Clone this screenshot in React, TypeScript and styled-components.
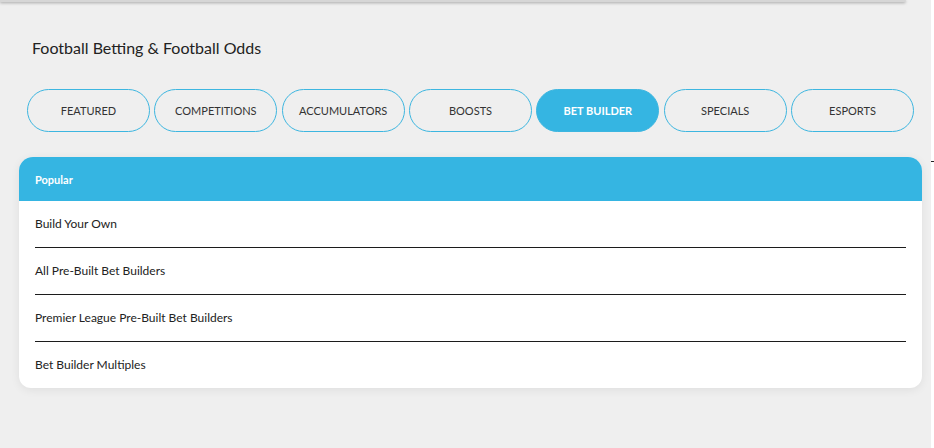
import React from "react";
import styled, { createGlobalStyle } from "styled-components";

const tabs = [
  "Featured",
  "Competitions",
  "Accumulators",
  "Boosts",
  "Bet Builder",
  "Specials",
  "Esports",
];

const links = [
  "Build Your Own",
  "All Pre-Built Bet Builders",
  "Premier League Pre-Built Bet Builders",
  "Bet Builder Multiples",
];

const App = () => {
  return (
    <Page>
      <GlobalStyle />
      <Main>
        <TopBar />
        <Title>Football Betting &amp; Football Odds</Title>
        <Tabs>
          {tabs.map((t) => (
            <Tab key={t} active={t === "Bet Builder"}>
              {t}
            </Tab>
          ))}
        </Tabs>
        <Card>
          <CardHead>Popular</CardHead>
          {links.map((l, i) => (
            <Row key={l} last={i === links.length - 1}>
              {l}
            </Row>
          ))}
        </Card>
      </Main>
      <Track>
        <Tick />
      </Track>
    </Page>
  );
};

export default App;

const GlobalStyle = createGlobalStyle`
  body {
    margin: 0;
    background: #efefef;
    font-family: Lato, "Open Sans", Arial, sans-serif;
    color: #222;
  }
`;

const Page = styled.div`
  display: flex;
  width: 934px;
  height: 448px;
  overflow: hidden;
`;

const Main = styled.div`
  width: 931px;
  display: flex;
  flex-direction: column;
`;

const TopBar = styled.div`
  width: 906px;
  height: 2px;
  background: #d6d6d6;
  border-bottom-right-radius: 3px;
  box-shadow: 0 1px 3px rgba(0, 0, 0, 0.35);
`;

const Title = styled.h1`
  margin: 37px 0 0 32px;
  font-size: 16px;
  line-height: 18px;
  font-weight: 400;
  color: #222;
`;

const Tabs = styled.div`
  display: flex;
  gap: 4.3px;
  margin: 32px 0 0 27px;
  width: 887px;
`;

const Tab = styled.div<{ active?: boolean }>`
  flex: 1;
  height: 43px;
  box-sizing: border-box;
  display: flex;
  align-items: center;
  justify-content: center;
  border-radius: 22px;
  border: 1px solid #3db6e0;
  background: ${(p) => (p.active ? "#35b5e2" : "transparent")};
  color: ${(p) => (p.active ? "#fff" : "#333")};
  font-size: 11px;
  font-weight: ${(p) => (p.active ? 700 : 400)};
  text-transform: uppercase;
`;

const Card = styled.div`
  margin: 25px 0 0 19px;
  width: 903px;
  background: #fff;
  border-radius: 14px 14px 12px 12px;
  overflow: hidden;
  box-shadow: 0 2px 10px rgba(0, 0, 0, 0.07);
`;

const CardHead = styled.div`
  height: 44px;
  display: flex;
  align-items: center;
  padding-left: 16px;
  background: #35b5e2;
  color: #fff;
  font-size: 11px;
  font-weight: 700;
`;

const Row = styled.div<{ last?: boolean }>`
  height: 44px;
  padding-bottom: 2px;
  margin: 0 16px;
  display: flex;
  align-items: center;
  font-size: 12px;
  color: #222;
  border-bottom: ${(p) => (p.last ? "none" : "1px solid #1c1c1c")};
`;

const Track = styled.div`
  width: 3px;
  background: #fff;
  display: flex;
  flex-direction: column;
`;

const Tick = styled.div`
  margin-top: 161px;
  height: 1px;
  background: #222;
`;
